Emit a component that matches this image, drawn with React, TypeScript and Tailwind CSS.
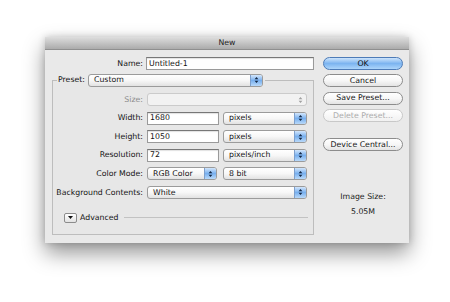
import type { ReactNode } from 'react'

function Arrows({ disabled }: { disabled?: boolean }) {
  return (
    <svg width="5" height="8" viewBox="0 0 5 8">
      <path d="M0.6 3.3 L2.5 0.9 L4.4 3.3 Z M0.6 4.7 L2.5 7.1 L4.4 4.7 Z" fill={disabled ? '#a0a0a0' : '#142846'} />
    </svg>
  )
}

function Popup({ value, className = '', disabled }: { value?: string; className?: string; disabled?: boolean }) {
  return (
    <div
      className={[
        'flex h-[13px] items-stretch overflow-hidden rounded-[3px] border',
        disabled
          ? 'border-[#cbcbcb] bg-[#f2f2f2]'
          : 'border-[#9b9b9b] bg-gradient-to-b from-white via-[#f7f7f7] to-[#e2e2e2]',
        className,
      ].join(' ')}
    >
      <span className="flex flex-1 items-center truncate pl-[5px]">{value}</span>
      <span
        className={[
          'flex w-[12px] items-center justify-center',
          disabled ? '' : 'border-l border-[#7d9fcc] bg-gradient-to-b from-[#d3e6fb] via-[#78b0ef] to-[#b9d9f9]',
        ].join(' ')}
      >
        <Arrows disabled={disabled} />
      </span>
    </div>
  )
}

function Field({ value, className = '' }: { value: string; className?: string }) {
  return (
    <div
      className={`flex h-[13px] items-center border border-[#9a9a9a] border-t-[#777] bg-white pl-[2px] shadow-[inset_0_1px_1px_rgba(0,0,0,0.12)] ${className}`}
    >
      {value}
    </div>
  )
}

function Row({ label, children, dim }: { label: string; children: ReactNode; dim?: boolean }) {
  return (
    <div className="flex h-[13px] items-center">
      <span className={`w-[90px] text-right ${dim ? 'text-[#8c8c8c]' : ''}`}>{label}</span>
      <div className="ml-[4px] flex w-[160px] items-center">{children}</div>
    </div>
  )
}

function Button({ children, primary, disabled }: { children: ReactNode; primary?: boolean; disabled?: boolean }) {
  const look = primary
    ? 'border-[#4d7bb7] bg-gradient-to-b from-[#cde4fb] via-[#7cb4f0] to-[#acd5fb] text-[#111]'
    : disabled
      ? 'border-[#c8c8c8] bg-gradient-to-b from-white to-[#f1f1f1] text-[#ababab]'
      : 'border-[#8c8c8c] bg-gradient-to-b from-white via-[#f7f7f7] to-[#e4e4e4] text-[#141414]'
  return (
    <button type="button" className={`flex h-[13px] w-[80px] items-center justify-center rounded-full border ${look}`}>
      {children}
    </button>
  )
}

export default function App() {
  return (
    <div className="h-[302px] w-[450px] bg-white pl-[45px] pt-[37px] font-['DejaVu_Sans',sans-serif] text-[7.8px] text-[#141414]">
      <div className="flex h-[206px] w-[364px] flex-col shadow-[0_10px_20px_rgba(0,0,0,0.42),0_0_7px_rgba(0,0,0,0.18)]">
        <div className="flex h-[13px] items-center justify-center border-b border-[#8f8f8f] bg-gradient-to-b from-[#dedede] to-[#ababab] text-[#222]">
          New
        </div>

        <div className="flex flex-1 bg-[#e9e9e9] pl-[7px] pr-[6px] pt-[7px]">
          <div className="flex w-[262px] flex-col">
            <div className="flex h-[13px] items-center">
              <span className="w-[91px] text-right">Name:</span>
              <Field value="Untitled-1" className="ml-[3px] w-[168px]" />
            </div>

            <fieldset className="mt-[4px] border border-[#bdbdbd] bg-[#e7e7e7] pb-[11px]">
              <legend className="ml-[4px] pl-[1px] pr-[2px]">
                <div className="flex h-[12px] items-center">
                  <span>Preset:</span>
                  <Popup value="Custom" className="ml-[3px] h-[12px] w-[175px]" />
                </div>
              </legend>

              <div className="flex flex-col gap-[5.6px] pt-[7px]">
                <Row label="Size:" dim>
                  <Popup className="w-full" disabled />
                </Row>
                <Row label="Width:">
                  <Field value="1680" className="w-[72px]" />
                  <Popup value="pixels" className="ml-[4px] w-[84px]" />
                </Row>
                <Row label="Height:">
                  <Field value="1050" className="w-[72px]" />
                  <Popup value="pixels" className="ml-[4px] w-[84px]" />
                </Row>
                <Row label="Resolution:">
                  <Field value="72" className="w-[72px]" />
                  <Popup value="pixels/inch" className="ml-[4px] w-[84px]" />
                </Row>
                <Row label="Color Mode:">
                  <Popup value="RGB Color" className="w-[70px]" />
                  <Popup value="8 bit" className="ml-[6px] w-[84px]" />
                </Row>
                <Row label="Background Contents:">
                  <Popup value="White" className="w-full" />
                </Row>
              </div>

              <div className="ml-[11px] mr-[5px] mt-[14px] flex h-[10px] items-center">
                <span className="flex h-[10px] w-[13px] items-center justify-center rounded-[2px] border border-[#8c8c8c] bg-gradient-to-b from-white to-[#e2e2e2]">
                  <svg width="5" height="3" viewBox="0 0 5 3">
                    <path d="M0 0 L5 0 L2.5 3 Z" fill="#111" />
                  </svg>
                </span>
                <span className="ml-[3px]">Advanced</span>
                <span className="ml-[5px] h-px flex-1 bg-[#c2c2c2]" />
              </div>
            </fieldset>
          </div>

          <div className="ml-[9px] flex w-[80px] flex-col">
            <div className="flex flex-col gap-[4.3px]">
              <Button primary>OK</Button>
              <Button>Cancel</Button>
              <Button>Save Preset...</Button>
              <Button disabled>Delete Preset...</Button>
            </div>
            <div className="mt-[16px]">
              <Button>Device Central...</Button>
            </div>
            <div className="mt-[38px] flex flex-col items-center leading-[15px] text-[#222]">
              <span>Image Size:</span>
              <span>5.05M</span>
            </div>
          </div>
        </div>
      </div>
    </div>
  )
}
